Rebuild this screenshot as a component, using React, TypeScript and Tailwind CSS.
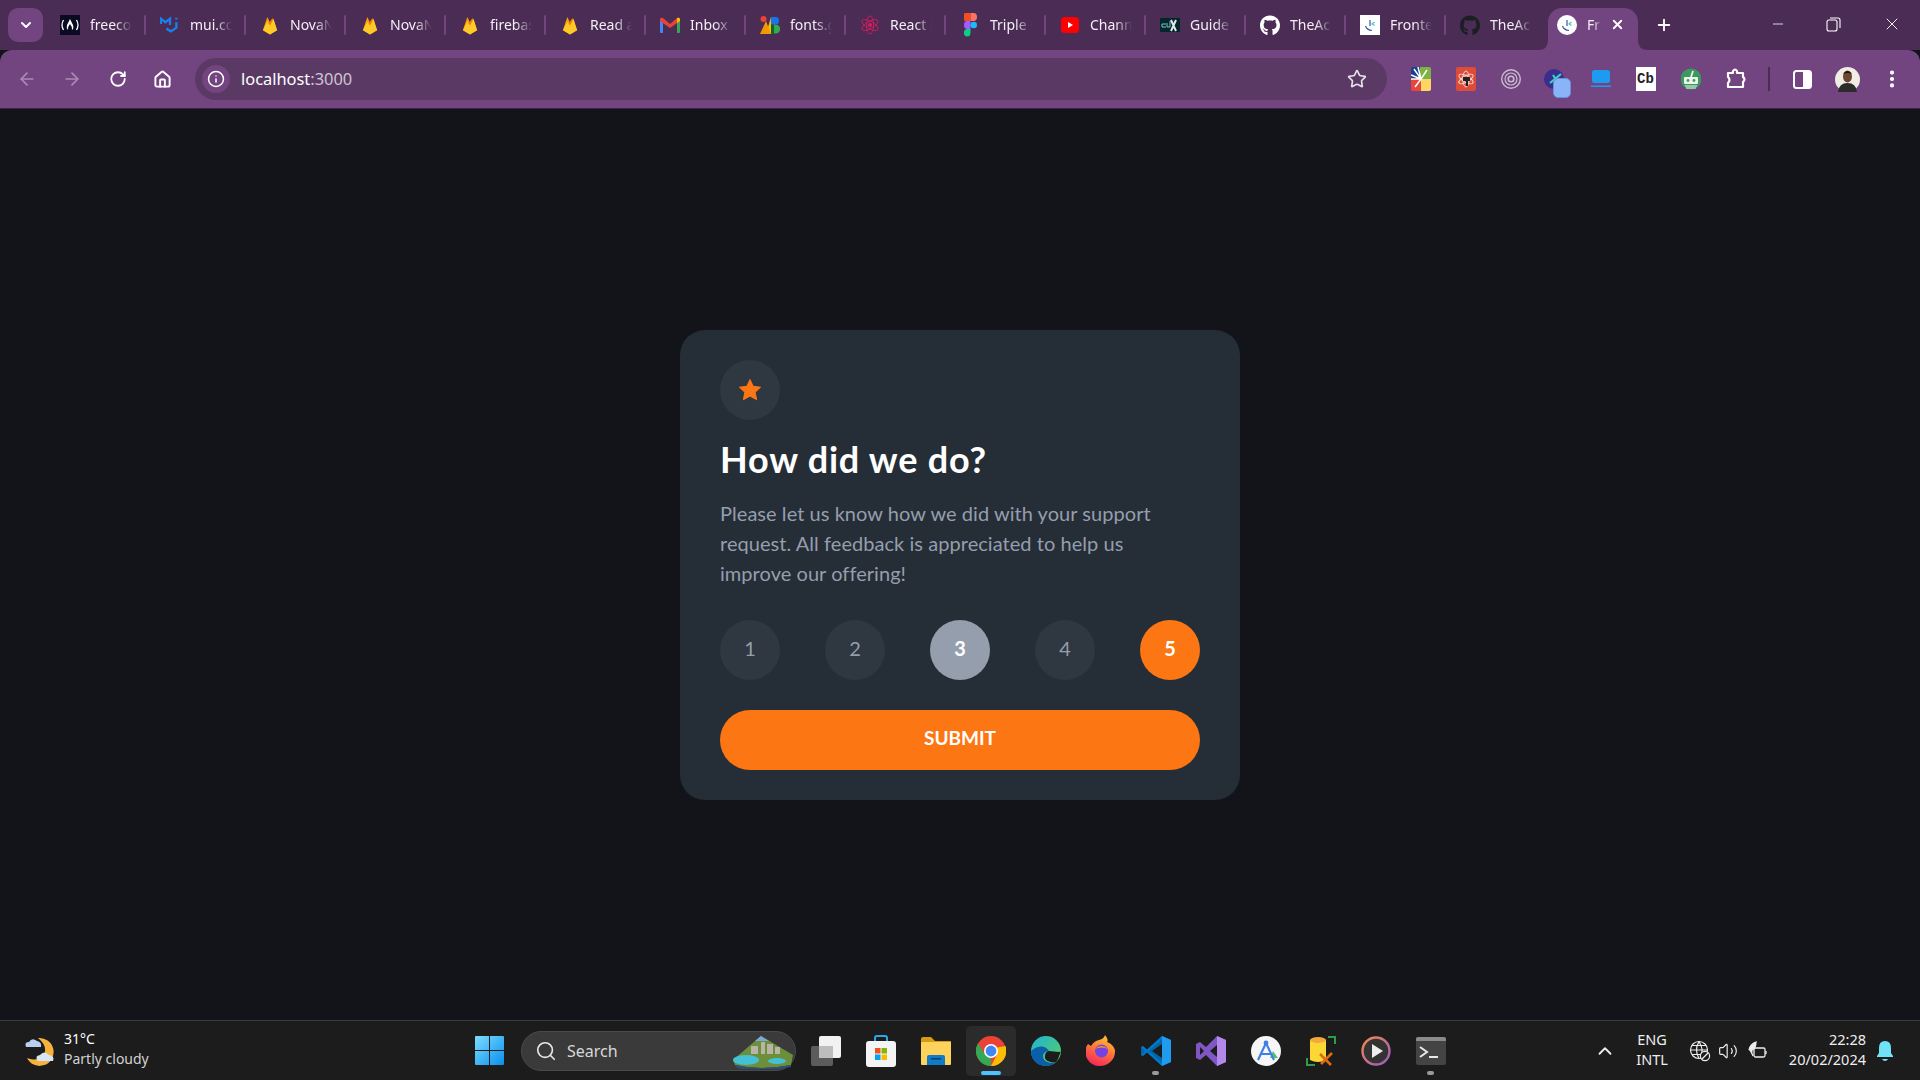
import React from "react";
import { FaGithub } from "react-icons/fa";
import { ChevronDown, ArrowLeft, ArrowRight, RotateCw, Home, Info, Star, Plus, X, Minus, Search, ChevronUp, Volume2, MoreVertical } from "lucide-react";

const Firebase = () => (
  <svg width="16" height="19" viewBox="0 0 18 20" preserveAspectRatio="none">
    <path d="M1 15 L6 1 L9 7 L7 12Z" fill="#ffa000" />
    <path d="M1 15 L12 2 L17 15 L9 19.5Z" fill="#f57c00" />
    <path d="M1 15 L6 6 L9 10 L13 3 L17 15 L9 19.5Z" fill="#ffca28" />
  </svg>
);
const FCC = () => (
  <svg width="20" height="20" viewBox="0 0 20 20">
    <rect width="20" height="20" fill="#0a0a23" />
    <path d="M3.5 5 Q0.5 10 3.5 15 M16.5 5 Q19.5 10 16.5 15" stroke="#fff" strokeWidth="1.3" fill="none" />
    <path d="M10 4 Q12 8 13 10 Q14 14 12 15 Q12 11 10 9 Q8 11 8 15 Q6 13 7 10 Q8 8 10 4Z" fill="#fff" />
  </svg>
);
const Mui = () => (
  <svg width="22" height="18" viewBox="0 0 22 18" fill="none" stroke="#1a7fea" strokeWidth="2.6">
    <path d="M1 8 V2 L6 6 L11 2 V9 M1 8" />
    <path d="M18 1 V3 M18 6 V12 L12 16 L7 13" />
  </svg>
);
const Gmail = () => (
  <svg width="20" height="16" viewBox="0 0 20 16">
    <path d="M0 3 L3 1 L3 16 L1 16 Q0 16 0 15Z" fill="#4285f4" />
    <path d="M17 1 L20 3 V15 Q20 16 19 16 H17Z" fill="#34a853" />
    <path d="M0 2 Q1 0 3 1 L10 7 L17 1 Q19 0 20 2 V4 L10 11 L0 4Z" fill="#ea4335" />
    <path d="M17 1 Q19 0 20 2 V4 L17 6Z" fill="#fbbc04" />
  </svg>
);
const Fonts = () => (
  <svg width="20" height="18" viewBox="0 0 20 18">
    <circle cx="3.5" cy="3" r="3" fill="#ea4335" />
    <path d="M6 18 L11 1 V18Z" fill="#fbbc04" />
    <path d="M0 18 L6 5 L11 18Z" fill="#f29900" />
    <path d="M11 1 H16 Q19 1 19 5 Q19 8 16 8.5 H11Z" fill="#1a73e8" />
    <circle cx="15.5" cy="13" r="4.6" fill="#34a853" />
    <rect x="11" y="9" width="3" height="9" fill="#0d652d" />
  </svg>
);
const ReactLogo = () => (
  <svg width="20" height="22" viewBox="-11 -11 22 22" fill="none" stroke="#d81b60" strokeWidth="0.9">
    <circle r="2" fill="#d81b60" />
    <ellipse rx="10" ry="4" transform="rotate(30)" />
    <ellipse rx="10" ry="4" transform="rotate(90)" />
    <ellipse rx="10" ry="4" transform="rotate(150)" />
  </svg>
);
const Figma = () => (
  <svg width="13" height="24" viewBox="0 0 13 24">
    <path d="M6.5 0 H2 A3.2 4 0 0 0 2 8 H6.5Z" fill="#f24e1e" />
    <path d="M6.5 0 H9.5 A3.5 4 0 0 1 9.5 8 H6.5Z" fill="#ff7262" />
    <path d="M6.5 8 H3 A3 4 0 0 0 3 16 H6.5Z" fill="#a259ff" />
    <circle cx="9.7" cy="12" r="3.3" fill="#1abcfe" />
    <path d="M3 16 H6.5 V20 A3.3 3.8 0 1 1 3 16Z" fill="#0acf83" />
  </svg>
);
const Youtube = () => (
  <svg width="18" height="16" viewBox="0 0 18 16">
    <rect width="18" height="16" rx="3.5" fill="#ff0000" />
    <path d="M7 5 L12 8 L7 11Z" fill="#fff" />
  </svg>
);
const Edx = () => (
  <svg width="20" height="14" viewBox="0 0 20 14">
    <rect width="20" height="14" rx="1" fill="#02262b" />
    <path d="M11 13 L16 2 M11 2 L16 13" stroke="#e6e6e6" strokeWidth="2" />
    <path d="M2 6 H6 M2 6 V9 H6 M7 9 V5 M7 9 H10 V3" stroke="#7fc2c9" strokeWidth="1" fill="none" />
  </svg>
);
const FmLogo = ({ round }: { round?: boolean }) => (
  <svg width="20" height="20" viewBox="0 0 20 20">
    {round ? <circle cx="10" cy="10" r="10" fill="#fff" /> : <rect width="20" height="20" fill="#fff" />}
    <path d="M5.5 11 Q7 15 12 15.5" stroke="#3f54a3" strokeWidth="1.2" fill="none" />
    <path d="M10 5 V11" stroke="#3f54a3" strokeWidth="1.2" />
    <path d="M14.5 7 L12 9 L14.5 10.5" stroke="#3ec6c6" strokeWidth="1.2" fill="none" />
  </svg>
);

const tabs: { t: string; i: React.ReactNode }[] = [
  { t: "freeco", i: <FCC /> },
  { t: "mui.co", i: <Mui /> },
  { t: "NovaN", i: <Firebase /> },
  { t: "NovaN", i: <Firebase /> },
  { t: "firebas", i: <Firebase /> },
  { t: "Read a", i: <Firebase /> },
  { t: "Inbox", i: <Gmail /> },
  { t: "fonts.g", i: <Fonts /> },
  { t: "React i", i: <ReactLogo /> },
  { t: "Triple C", i: <Figma /> },
  { t: "Chann", i: <Youtube /> },
  { t: "Guide", i: <Edx /> },
  { t: "TheAc", i: <FaGithub size={21} color="#fff" /> },
  { t: "Fronte", i: <FmLogo /> },
  { t: "TheAc", i: <FaGithub size={21} color="#1b1f23" /> },
];

const Ext = ({ children }: { children: React.ReactNode }) => (
  <div className="relative flex h-[59px] w-[45px] items-center justify-center">{children}</div>
);

const TaskIcon = ({ children, dot, active }: { children: React.ReactNode; dot?: boolean; active?: boolean }) => (
  <div className="relative flex h-[50px] w-[55px] items-center justify-center">
    {active && <div className="absolute left-[2.5px] top-0 h-[50px] w-[50px] rounded-[5px] bg-[#2b2b2b]" />}
    <div className="relative flex h-[30px] w-[30px] items-center justify-center">{children}</div>
    {dot && <div className="absolute bottom-[1px] left-[24px] h-[4px] w-[7px] rounded-full bg-[#9a9a9a]" />}
    {active && <div className="absolute bottom-[1px] left-[17.5px] h-[4px] w-[20px] rounded-full bg-[#4cc2ff]" />}
  </div>
);

const Chrome = () => (
  <svg width="30" height="30" viewBox="-15 -15 30 30">
    <circle r="15" fill="#ea4335" />
    <path d="M0 15 A15 15 0 0 1 -13 -7.5 L-6 3.5 L0 7Z" fill="#34a853" />
    <path d="M14.5 -5 A15 15 0 0 1 0 15 L6 3.5 L6 -3.5Z" fill="#fbbc04" />
    <circle r="7" fill="#fff" />
    <circle r="5.4" fill="#4285f4" />
  </svg>
);
const Edge = () => (
  <svg width="30" height="30" viewBox="0 0 30 30">
    <defs>
      <linearGradient id="eg" x1="0" y1="0" x2="1" y2="1">
        <stop offset="0" stopColor="#1fb2d8" />
        <stop offset="1" stopColor="#5bd05a" />
      </linearGradient>
    </defs>
    <circle cx="15" cy="15" r="15" fill="url(#eg)" />
    <path d="M0 15 C0 24 7 30 15 30 C20 30 23 28 25 26 C19 28 12 26 12 20 C12 17 15 15 18 15 C15 10 8 8 0 15Z" fill="#0b5ea8" />
    <path d="M18 15 C22 15 30 17 30 15 C28 20 27 24 25 26 C20 27 13 25 14 20 C14 17 16 15 18 15Z" fill="#1c1c1c" />
  </svg>
);
const Firefox = () => (
  <svg width="30" height="32" viewBox="0 0 30 32">
    <defs>
      <linearGradient id="ff" x1="0.7" y1="0" x2="0.3" y2="1">
        <stop offset="0" stopColor="#ffc531" />
        <stop offset="0.5" stopColor="#ff7139" />
        <stop offset="1" stopColor="#f3245e" />
      </linearGradient>
    </defs>
    <path d="M15 31 A14.5 14 0 0 1 2 9 L5 11 Q8 6 13 5 Q18 4 19 0 Q23 5 21 7 Q27 9 29 15 A14.5 15 0 0 1 15 31Z" fill="url(#ff)" />
    <circle cx="15.5" cy="16" r="6.5" fill="#7542e5" />
    <path d="M9 14 Q15 8 22 14 Q15 11 9 14Z" fill="#ff980e" />
  </svg>
);
const VSCode = () => (
  <svg width="30" height="30" viewBox="0 0 30 30">
    <path d="M21 0 L30 4 V26 L21 30 L6 16 L1 20 L0 18 V12 L1 10 L6 14Z" fill="#0065a9" />
    <path d="M21 0 L30 4 V26 L21 30Z" fill="#1f9cf0" />
    <path d="M21 8 L11 15 L21 22Z" fill="#1c1c1c" />
    <path d="M0 11 L2 10 L21 27 V30 Z" fill="#007acc" />
    <path d="M0 19 L2 20 L21 3 V0Z" fill="#007acc" />
  </svg>
);
const VS = () => (
  <svg width="30" height="30" viewBox="0 0 30 30">
    <path d="M21 0 L30 4 V26 L21 30 L10 19 L4 24 L0 22 V8 L4 6 L10 11Z" fill="#7e57c2" />
    <path d="M21 0 L30 4 V26 L21 30Z" fill="#b388eb" />
    <path d="M21 9 L14 15 L21 21Z" fill="#1c1c1c" />
    <path d="M4 11 V19 L8 15Z" fill="#1c1c1c" />
  </svg>
);

export default function App() {
  return (
    <div className="flex h-screen w-full flex-col overflow-hidden bg-[#12141a] font-['Noto_Sans',sans-serif]">
      {/* Tab strip */}
      <div className="flex h-[50px] shrink-0 items-start bg-[#4a2c54] pl-[8px] pt-[8px] text-white">
        <div className="flex h-[34px] w-[35px] items-center justify-center rounded-[10px] bg-[#724480]">
          <ChevronDown size={16} strokeWidth={3} />
        </div>
        <div className="ml-[3px] flex h-[34px]">
          {tabs.map((tab, i) => (
            <div key={i} className="relative flex h-[34px] w-[100px] items-center pl-[14px]">
              <div className="flex h-[24px] w-[20px] items-center justify-center">{tab.i}</div>
              <div className="ml-[10px] w-[42px] whitespace-nowrap text-[14px] leading-[24px] text-[#f4eff5] [mask-image:linear-gradient(to_right,black_60%,transparent_100%)]">
                {tab.t}
              </div>
              {i < 14 && <div className="absolute right-0 top-[7px] h-[20px] w-[2px] rounded-full bg-[#724480]" />}
            </div>
          ))}
        </div>
        <div className="relative ml-[2px] flex h-[42px] w-[90px] items-start rounded-t-[14px] bg-[#724480] pl-[9px] pt-[5px]">
          <svg className="absolute -left-[10px] bottom-0" width="10" height="10" viewBox="0 0 10 10"><path d="M10 0 V10 H0 Q10 10 10 0Z" fill="#724480" /></svg>
          <svg className="absolute -right-[10px] bottom-0" width="10" height="10" viewBox="0 0 10 10"><path d="M0 0 V10 H10 Q0 10 0 0Z" fill="#724480" /></svg>
          <div className="mt-[2px]"><FmLogo round /></div>
          <div className="ml-[10px] w-[14px] whitespace-nowrap text-[14px] leading-[24px] text-[#f4eff5] [mask-image:linear-gradient(to_right,black_50%,transparent_100%)]">Fr</div>
          <X size={15} strokeWidth={3} className="ml-[9px] mt-[4px]" />
        </div>
        <Plus size={18} strokeWidth={2.5} className="ml-[17px] mt-[8px]" />
        <div className="flex-1" />
        <div className="mt-[4px] flex h-[24px] items-center pr-[18px]">
          <Minus size={16} strokeWidth={1.2} />
          <svg className="ml-[40px]" width="15" height="15" viewBox="0 0 15 15" fill="none" stroke="#fff" strokeWidth="1.1">
            <rect x="1" y="3" width="10" height="11" rx="2" />
            <path d="M4 1 H12 Q14 1 14 3 V11" />
          </svg>
          <X size={20} strokeWidth={1.1} className="ml-[41px]" />
        </div>
      </div>

      {/* Toolbar */}
      <div className="flex h-[59px] shrink-0 items-center rounded-t-[12px] border-b border-[#3d2446] bg-[#724480] text-white">
        <div className="flex w-[195px] shrink-0 items-center pl-[17px]">
          <ArrowLeft size={20} strokeWidth={2} className="text-[#a98db2]" />
          <ArrowRight size={20} strokeWidth={2} className="ml-[25px] text-[#a98db2]" />
          <RotateCw size={18} strokeWidth={2.4} className="ml-[27px]" />
          <Home size={19} strokeWidth={2.4} className="ml-[26px]" />
        </div>
        <div className="flex h-[42px] w-[1192px] shrink-0 items-center rounded-full bg-[#5a3a64] pl-[7px] pr-[20px]">
          <div className="flex h-[28px] w-[28px] items-center justify-center rounded-full bg-[#724480]">
            <Info size={18} strokeWidth={2} />
          </div>
          <div className="ml-[11px] text-[16.4px] leading-[24px] text-white">
            localhost<span className="text-[#d0c3d4]">:3000</span>
          </div>
          <div className="flex-1" />
          <Star size={20} strokeWidth={2} className="text-[#e6dfe8]" />
        </div>
        <div className="ml-[11px] flex items-center">
          <Ext>
            <svg width="20" height="24" viewBox="0 0 20 24">
              <rect width="20" height="24" rx="2" fill="#e8453c" />
              <path d="M9 0 H18 Q20 0 20 2 V12 H9Z" fill="#7cb342" />
              <path d="M10 12 H20 V22 Q20 24 18 24 H10Z" fill="#fdd663" />
              <path d="M0 2 Q0 0 2 0 H9 V12 H0Z" fill="#1a3f8f" />
              <path d="M0 12 L10 12 M10 12 L3 2 M10 12 L7 0 M10 12 L16 3 M10 12 L0 8 M10 12 L4 20" stroke="#fff" strokeWidth="1.5" />
            </svg>
          </Ext>
          <Ext>
            <svg width="20" height="24" viewBox="-10 -12 20 24">
              <rect x="-10" y="-12" width="20" height="24" rx="2" fill="#dd4b39" />
              <g fill="none" stroke="#f6d5cf" strokeWidth="1">
                <ellipse rx="8" ry="3.2" transform="rotate(30)" />
                <ellipse rx="8" ry="3.2" transform="rotate(150)" />
                <ellipse rx="8" ry="3.2" transform="rotate(90)" />
              </g>
              <path d="M-3 -2 H4 V2 H2 V7 H0 V2 H-3Z" fill="#222" />
            </svg>
          </Ext>
          <Ext>
            <svg width="20" height="24" viewBox="-10 -12 20 24" fill="none" stroke="#c9bccd">
              <circle r="9.3" strokeWidth="1.4" />
              <circle r="6" strokeWidth="1.2" />
              <circle r="2.8" strokeWidth="1.6" />
            </svg>
          </Ext>
          <Ext>
            <svg width="22" height="24" viewBox="0 0 22 24" className="-translate-x-[1px]">
              <circle cx="10" cy="12" r="10" fill="#3b2d8f" />
              <path d="M6 16 L17 7 M9 8 L15 17" stroke="#35d6c2" strokeWidth="2.2" />
            </svg>
            <div className="absolute left-[20px] top-[28px] h-[20px] w-[18px] rounded-[5px] border border-[#6a8fd8] bg-[#8ab4f8]" />
          </Ext>
          <Ext>
            <svg width="20" height="20" viewBox="0 0 20 20">
              <rect x="1" y="1" width="18" height="13" rx="2.5" fill="#1e9bf0" />
              <rect y="16.5" width="20" height="1.5" fill="#1e9bf0" />
            </svg>
          </Ext>
          <Ext>
            <div className="flex h-[24px] w-[20px] items-center justify-center bg-white font-['Liberation_Mono',monospace] text-[14px] font-bold text-[#222]">Cb</div>
          </Ext>
          <Ext>
            <svg width="20" height="24" viewBox="-10 -12 20 24">
              <circle r="10.5" fill="#3c9a5f" />
              <rect x="-7" y="-2" width="14" height="7" rx="1" fill="#eef5ef" />
              <circle cx="-3" cy="1.5" r="1.4" fill="#3c9a5f" />
              <circle cx="3" cy="1.5" r="1.4" fill="#3c9a5f" />
              <path d="M0 -2 L2 -8" stroke="#eef5ef" strokeWidth="1.8" />
              <path d="M-6 7 H6 M-5 9 H5" stroke="#eef5ef" strokeWidth="1.2" />
            </svg>
          </Ext>
          <Ext>
            <svg width="24" height="24" viewBox="0 0 24 24" fill="none" stroke="#fff" strokeWidth="2.2" strokeLinejoin="round">
              <path d="M4 6 H9 V4 Q11 1 13 4 V6 H19 V10 Q22 12 19 15 V20 H4 V16 Q7 13 4 10Z" />
            </svg>
          </Ext>
          <div className="ml-[10px] h-[24px] w-[2px] bg-[#4a2c54]" />
          <div className="ml-[10px] flex h-[59px] w-[45px] items-center justify-center">
            <svg width="19" height="19" viewBox="0 0 19 19">
              <rect x="1" y="1" width="17" height="17" rx="2.5" fill="none" stroke="#fff" strokeWidth="2" />
              <rect x="10" y="1" width="8" height="17" fill="#fff" />
            </svg>
          </div>
          <Ext>
            <svg width="25" height="25" viewBox="0 0 25 25">
              <circle cx="12.5" cy="12.5" r="12.5" fill="#f0ece6" />
              <path d="M3 25 Q4 16 12.5 16 Q21 16 22 25Z" fill="#2b2b2b" />
              <ellipse cx="12.5" cy="9.5" rx="4.5" ry="6" fill="#6d4632" />
              <path d="M8 7 Q12.5 1 17 7 Q12.5 5 8 7Z" fill="#1d1410" />
            </svg>
          </Ext>
          <MoreVertical size={22} strokeWidth={2.6} className="ml-[11px]" />
        </div>
      </div>

      {/* Main */}
      <main className="flex flex-1 items-center justify-center">
        <div className="flex h-[470px] w-[560px] flex-col rounded-[25px] bg-[#252d37] px-[40px] py-[30px] font-['Lato',sans-serif]">
          <div className="flex h-[60px] w-[60px] items-center justify-center rounded-full bg-[#2f3741]">
            <svg width="22" height="22" viewBox="0 0 22 22">
              <path d="M11 0.5 L14.2 7.3 L21.6 8.2 L16.2 13.3 L17.6 20.7 L11 17.1 L4.4 20.7 L5.8 13.3 L0.4 8.2 L7.8 7.3Z" fill="#fc7614" stroke="#fc7614" strokeLinejoin="round" />
            </svg>
          </div>
          <h1 className="mt-[14px] text-[36px] font-bold leading-[50px] tracking-[0.8px] text-white">How did we do?</h1>
          <p className="mt-[14px] w-[460px] text-[20px] leading-[30px] tracking-[0.05px] text-[#959eac]">
            Please let us know how we did with your support request. All feedback is appreciated to help us improve our offering!
          </p>
          <div className="mt-[32px] flex justify-between">
            <div className="flex h-[60px] w-[60px] items-center justify-center rounded-full bg-[#2f3741] pb-[4px] text-[20px] text-[#959eac]">1</div>
            <div className="flex h-[60px] w-[60px] items-center justify-center rounded-full bg-[#2f3741] pb-[4px] text-[20px] text-[#959eac]">2</div>
            <div className="flex h-[60px] w-[60px] items-center justify-center rounded-full bg-[#959eac] pb-[4px] text-[20px] font-bold text-white">3</div>
            <div className="flex h-[60px] w-[60px] items-center justify-center rounded-full bg-[#2f3741] pb-[4px] text-[20px] text-[#959eac]">4</div>
            <div className="flex h-[60px] w-[60px] items-center justify-center rounded-full bg-[#fc7614] pb-[4px] text-[20px] font-bold text-white">5</div>
          </div>
          <button className="mt-[30px] flex h-[60px] items-center justify-center rounded-full bg-[#fc7614] pb-[2px] text-[19px] font-bold text-white">SUBMIT</button>
        </div>
      </main>

      {/* Taskbar */}
      <div className="flex h-[60px] shrink-0 items-center border-t border-[#3a3a3a] bg-[#1c1c1c] text-white">
        <div className="flex w-[462px] shrink-0 items-center pl-[24px]">
          <svg width="32" height="32" viewBox="0 0 32 32">
            <path d="M14 3 A14 14 0 1 1 3 23 A14 13 0 0 0 20 20 Q24 11 14 3Z" fill="#f6b23c" />
            <path d="M2 12 Q0 7 5 7 Q8 2 13 6 Q18 7 17 12Z" fill="#b9cff0" />
            <path d="M14 26 Q10 21 16 20 Q20 15 25 20 Q31 21 29 26Z" fill="#d7e5fa" />
          </svg>
          <div className="ml-[8px] pb-[3px] text-[14px] leading-[20px]">
            <div>31°C</div>
            <div className="text-[#d2d2d2]">Partly cloudy</div>
          </div>
        </div>
        <div className="flex h-[50px] w-[55px] shrink-0 items-center justify-center">
          <svg width="29" height="29" viewBox="0 0 29 29">
            <defs>
              <linearGradient id="w" x1="0" y1="0" x2="1" y2="1">
                <stop offset="0" stopColor="#7ddcff" />
                <stop offset="1" stopColor="#0a8fec" />
              </linearGradient>
            </defs>
            <path d="M0 1 Q0 0 1 0 H14 V14 H0Z M15 0 H28 Q29 0 29 1 V14 H15Z M0 15 H14 V29 H1 Q0 29 0 28Z M15 15 H29 V28 Q29 29 28 29 H15Z" fill="url(#w)" />
          </svg>
        </div>
        <div className="ml-[4px] flex h-[40px] w-[275px] shrink-0 items-center rounded-full border border-[#4a4a4a] bg-[#3a3a3a] pl-[13px]">
          <Search size={22} strokeWidth={1.8} className="text-[#e8e8e8]" />
          <div className="ml-[10px] text-[16px] text-[#d8d8d8]">Search</div>
          <div className="flex-1" />
          <svg width="64" height="36" viewBox="0 0 64 36">
            <path d="M2 27 L24 8 L30 3 L62 22 L60 32 Q30 38 4 32Z" fill="#6b8f3a" />
            <path d="M24 8 L30 3 L38 8 Z" fill="#7fa8d8" />
            <ellipse cx="15" cy="27" rx="13" ry="5" fill="#45c1d6" />
            <ellipse cx="46" cy="28" rx="9" ry="3" fill="#45c1d6" />
            <path d="M20 13 H27 V21 H20Z M30 9 H34 V21 H30Z M36 11 H42 V21 H36Z M44 14 H49 V21 H44Z" fill="#b8b4a8" />
            <path d="M4 32 Q30 38 60 32 L60 34 Q30 40 6 35Z" fill="#2d4f7c" />
          </svg>
        </div>
        <div className="ml-[2px] flex shrink-0 items-center">
          <TaskIcon>
            <svg width="30" height="30" viewBox="0 0 30 30">
              <rect x="0" y="10" width="22" height="20" rx="2" fill="#5c5c5c" />
              <rect x="8" y="0" width="22" height="22" rx="2" fill="#f2f2f2" />
              <rect x="8" y="10" width="14" height="12" fill="#bdbdbd" />
            </svg>
          </TaskIcon>
          <TaskIcon>
            <svg width="30" height="32" viewBox="0 0 30 32">
              <path d="M9 7 V3 Q9 1 11 1 H19 Q21 1 21 3 V7" fill="none" stroke="#29a8e8" strokeWidth="2" />
              <rect y="6" width="30" height="26" rx="3" fill="#f4f4f4" />
              <rect x="9" y="13" width="5.5" height="5.5" fill="#f25022" />
              <rect x="15.5" y="13" width="5.5" height="5.5" fill="#7fba00" />
              <rect x="9" y="19.5" width="5.5" height="5.5" fill="#00a4ef" />
              <rect x="15.5" y="19.5" width="5.5" height="5.5" fill="#ffb900" />
            </svg>
          </TaskIcon>
          <TaskIcon>
            <svg width="30" height="28" viewBox="0 0 30 28">
              <path d="M0 2 Q0 0 2 0 H10 L14 4 H30 V27 H0Z" fill="#d69d12" />
              <rect y="5" width="30" height="23" rx="1" fill="#fdd35c" />
              <path d="M6 28 V20 Q6 18 8 18 H22 Q24 18 24 20 V28Z" fill="#0f7bc8" />
              <rect x="10" y="21" width="10" height="1.5" fill="#0b3f70" />
            </svg>
          </TaskIcon>
          <TaskIcon active><Chrome /></TaskIcon>
          <TaskIcon><Edge /></TaskIcon>
          <TaskIcon><Firefox /></TaskIcon>
          <TaskIcon dot><VSCode /></TaskIcon>
          <TaskIcon><VS /></TaskIcon>
          <TaskIcon>
            <svg width="30" height="30" viewBox="0 0 30 30">
              <circle cx="15" cy="15" r="15" fill="#f6f6f6" />
              <path d="M22 15 L27 22 H19Z" fill="#56c271" />
              <path d="M7 24 L15 7 L23 24 M10 18 H20" fill="none" stroke="#3f7fe8" strokeWidth="2.2" />
              <circle cx="15" cy="7" r="2.4" fill="#3f7fe8" />
            </svg>
          </TaskIcon>
          <TaskIcon>
            <svg width="30" height="30" viewBox="0 0 30 30" fill="none">
              <path d="M4 4 V24 Q12 28 20 24 V4Z" fill="#fdd835" />
              <ellipse cx="12" cy="4" rx="8" ry="3" fill="#f3a93c" />
              <path d="M22 1 H29 V8 M1 22 V29 H9" stroke="#2e9e46" strokeWidth="2" />
              <path d="M14 18 L25 29 M26 17 L15 28" stroke="#e06a14" strokeWidth="2.6" />
            </svg>
          </TaskIcon>
          <TaskIcon>
            <svg width="30" height="30" viewBox="0 0 30 30">
              <defs>
                <linearGradient id="p" x1="0" y1="0" x2="1" y2="1">
                  <stop offset="0" stopColor="#f08a4b" />
                  <stop offset="1" stopColor="#9b59c6" />
                </linearGradient>
              </defs>
              <circle cx="15" cy="15" r="13.5" fill="#333" stroke="url(#p)" strokeWidth="2.4" />
              <path d="M11 8 L22 15 L11 22Z" fill="#eee" />
            </svg>
          </TaskIcon>
          <TaskIcon dot>
            <svg width="30" height="28" viewBox="0 0 30 28">
              <rect width="30" height="28" rx="2" fill="#444" />
              <path d="M0 2 Q0 0 2 0 H28 Q30 0 30 2 V4 H0Z" fill="#8a8a8a" />
              <path d="M4 10 L11 15 L4 20" stroke="#e8e8e8" strokeWidth="2" fill="none" />
              <rect x="13" y="19" width="9" height="2" fill="#e8e8e8" />
            </svg>
          </TaskIcon>
        </div>
        <div className="flex-1" />
        <ChevronUp size={22} strokeWidth={2} className="mr-[20px] text-[#eee]" />
        <div className="mr-[21px] pb-[4px] text-center text-[14.5px] leading-[20px] text-[#eee]">
          <div>ENG</div>
          <div>INTL</div>
        </div>
        <svg width="22" height="22" viewBox="0 0 22 22" fill="none" stroke="#eee" strokeWidth="1.2" className="mr-[7px]">
          <circle cx="10" cy="10" r="8.5" />
          <path d="M1.5 10 H18.5 M3 5.5 H17 M3 14.5 H11 M10 1.5 Q5 10 10 18.5 M10 1.5 Q15 10 12 15" />
          <circle cx="16" cy="16" r="4.6" fill="#1c1c1c" />
          <path d="M13 19 L19 13" />
        </svg>
        <Volume2 size={20} strokeWidth={1.4} className="mr-[9px] text-[#eee]" />
        <svg width="21" height="20" viewBox="0 0 21 20" fill="none" stroke="#eee" strokeWidth="1.3" className="mr-[21px]">
          <rect x="7" y="7" width="11" height="9" rx="1.5" />
          <path d="M19 10 V13" />
          <path d="M2 9 Q3 3 9 1 Q9 7 5 9 Q4 12 6 15" fill="#eee" />
        </svg>
        <div className="pb-[4px] text-right text-[14.5px] leading-[20px] text-[#eee]">
          <div>22:28</div>
          <div>20/02/2024</div>
        </div>
        <svg width="18" height="22" viewBox="0 0 18 22" className="ml-[10px] mr-[26px]">
          <path d="M9 1 Q15 1 15 8 V13 L17 16 V17 H1 V16 L3 13 V8 Q3 1 9 1Z" fill="#6fe3f5" />
          <path d="M6 19 H12 Q11 21 9 21 Q7 21 6 19Z" fill="#6fe3f5" />
        </svg>
      </div>
    </div>
  );
}
